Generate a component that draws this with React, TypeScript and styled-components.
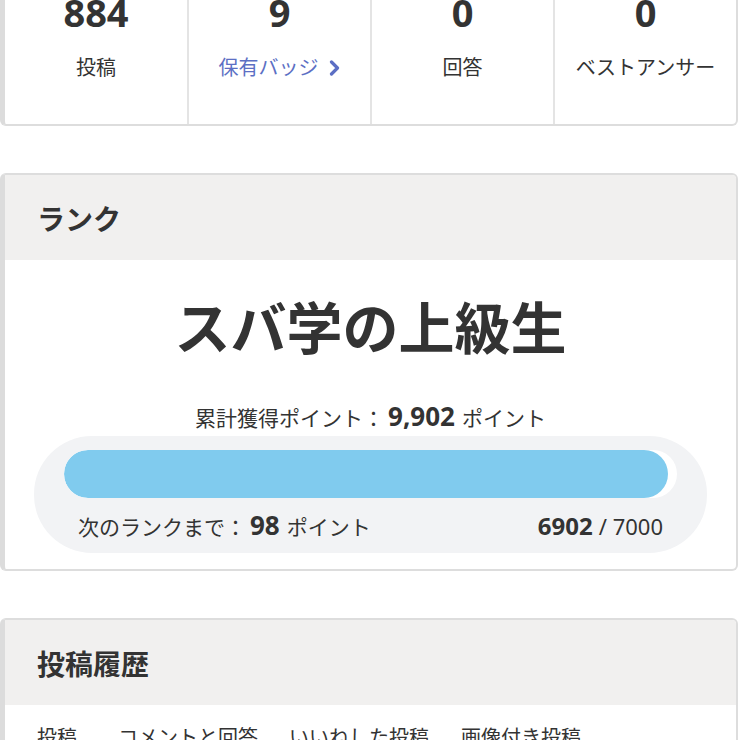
import * as React from "react";
import styled, { createGlobalStyle } from "styled-components";

const GlobalStyle = createGlobalStyle`
  html, body {
    margin: 0;
    padding: 0;
    background: #fff;
    overflow: hidden;
  }
  body {
    font-family: "Noto Sans", "Noto Sans CJK JP", sans-serif;
    color: #333;
  }
`;

const Page = styled.div`
  width: 740px;
  height: 740px;
  overflow: hidden;
  display: flex;
  flex-direction: column;
  gap: 47px;
`;

const Card = styled.section<{ $offset?: number }>`
  flex: none;
  margin-top: ${p => (p.$offset ? `${p.$offset}px` : "0")};
  width: 738px;
  box-sizing: border-box;
  background: #fff;
  border: 2px solid #dddddd;
  border-left: 5px solid #dcdcdc;
  border-radius: 6px;
  overflow: hidden;
`;

const StatsRow = styled.div`
  display: grid;
  grid-template-columns: 182px 183px 183px 1fr;
`;

const StatCell = styled.div`
  display: flex;
  flex-direction: column;
  align-items: center;
  padding: 18px 0 41px;
  & + & {
    border-left: 2px solid #e4e4e4;
  }
`;

const StatNumber = styled.div`
  font-size: 38px;
  font-weight: 700;
  line-height: 48px;
  color: #333;
`;

const StatLabel = styled.div<{ $link?: boolean }>`
  margin-top: 17px;
  font-size: 20px;
  line-height: 30px;
  color: ${p => (p.$link ? "#5c6fc4" : "#333")};
  display: flex;
  align-items: center;
  gap: 10px;
`;

const CardHeader = styled.header`
  background: #f1f0ef;
  height: 85px;
  display: flex;
  align-items: center;
  padding-left: 32px;
  font-size: 28px;
  font-weight: 700;
  color: #333;
`;

const RankBody = styled.div`
  padding: 31px 29px 16px;
  display: flex;
  flex-direction: column;
  align-items: center;
`;

const RankTitle = styled.h1`
  margin: 0;
  font-size: 56px;
  font-weight: 700;
  line-height: 72px;
  color: #333;
`;

const TotalLine = styled.div`
  margin-top: 37px;
  font-size: 21px;
  line-height: 32px;
  color: #333;
  display: flex;
  align-items: baseline;
`;

const Strong = styled.b<{ $size: number }>`
  font-size: ${p => p.$size}px;
  font-weight: 700;
  margin: 0 7px 0 4px;
`;

const ProgressBox = styled.div`
  align-self: stretch;
  margin-top: 2px;
  background: #f2f3f5;
  border-radius: 58px;
  padding: 14px 30px 10px;
`;

const Track = styled.div`
  height: 48px;
  background: #fff;
  border-radius: 24px;
  overflow: hidden;
`;

const Fill = styled.div`
  height: 100%;
  background: #80cbee;
  border-radius: 24px;
`;

const ProgressFoot = styled.div`
  display: flex;
  justify-content: space-between;
  align-items: baseline;
  padding: 11px 14px 0;
  font-size: 21px;
  line-height: 32px;
  color: #333;
`;

const Total = styled.span`
  font-size: 22px;
  b {
    font-size: 24px;
    font-weight: 700;
    margin-right: 6px;
  }
`;

const Tabs = styled.nav`
  display: flex;
  padding: 18px 0 0 32px;
  font-size: 20px;
  line-height: 30px;
  color: #333;
`;

const Tab = styled.span<{ $w: number }>`
  width: ${p => p.$w}px;
  flex: none;
`;

const Chevron = () => (
  <svg width="12" height="16" viewBox="0 0 12 16">
    <path d="M2.5 2 L8.5 8 L2.5 14" fill="none" stroke="#5c6fc4" strokeWidth="3.2" strokeLinecap="round" strokeLinejoin="round" />
  </svg>
);

const current = 6902;
const goal = 7000;

export default function App() {
  return (
    <Page>
      <GlobalStyle />
      <Card $offset={-32}>
        <StatsRow>
          <StatCell>
            <StatNumber>884</StatNumber>
            <StatLabel>投稿</StatLabel>
          </StatCell>
          <StatCell>
            <StatNumber>9</StatNumber>
            <StatLabel $link>
              保有バッジ <Chevron />
            </StatLabel>
          </StatCell>
          <StatCell>
            <StatNumber>0</StatNumber>
            <StatLabel>回答</StatLabel>
          </StatCell>
          <StatCell>
            <StatNumber>0</StatNumber>
            <StatLabel>ベストアンサー</StatLabel>
          </StatCell>
        </StatsRow>
      </Card>

      <Card>
        <CardHeader>ランク</CardHeader>
        <RankBody>
          <RankTitle>スバ学の上級生</RankTitle>
          <TotalLine>
            累計獲得ポイント：<Strong $size={26}>9,902</Strong>ポイント
          </TotalLine>
          <ProgressBox>
            <Track>
              <Fill style={{ width: `${(current / goal) * 100}%` }} />
            </Track>
            <ProgressFoot>
              <span>
                次のランクまで：<Strong $size={26}>{goal - current}</Strong>ポイント
              </span>
              <Total>
                <b>{current}</b>/ {goal}
              </Total>
            </ProgressFoot>
          </ProgressBox>
        </RankBody>
      </Card>

      <Card>
        <CardHeader>投稿履歴</CardHeader>
        <Tabs>
          <Tab $w={81}>投稿</Tab>
          <Tab $w={171}>コメントと回答</Tab>
          <Tab $w={172}>いいねした投稿</Tab>
          <Tab $w={160}>画像付き投稿</Tab>
        </Tabs>
      </Card>
    </Page>
  );
}
